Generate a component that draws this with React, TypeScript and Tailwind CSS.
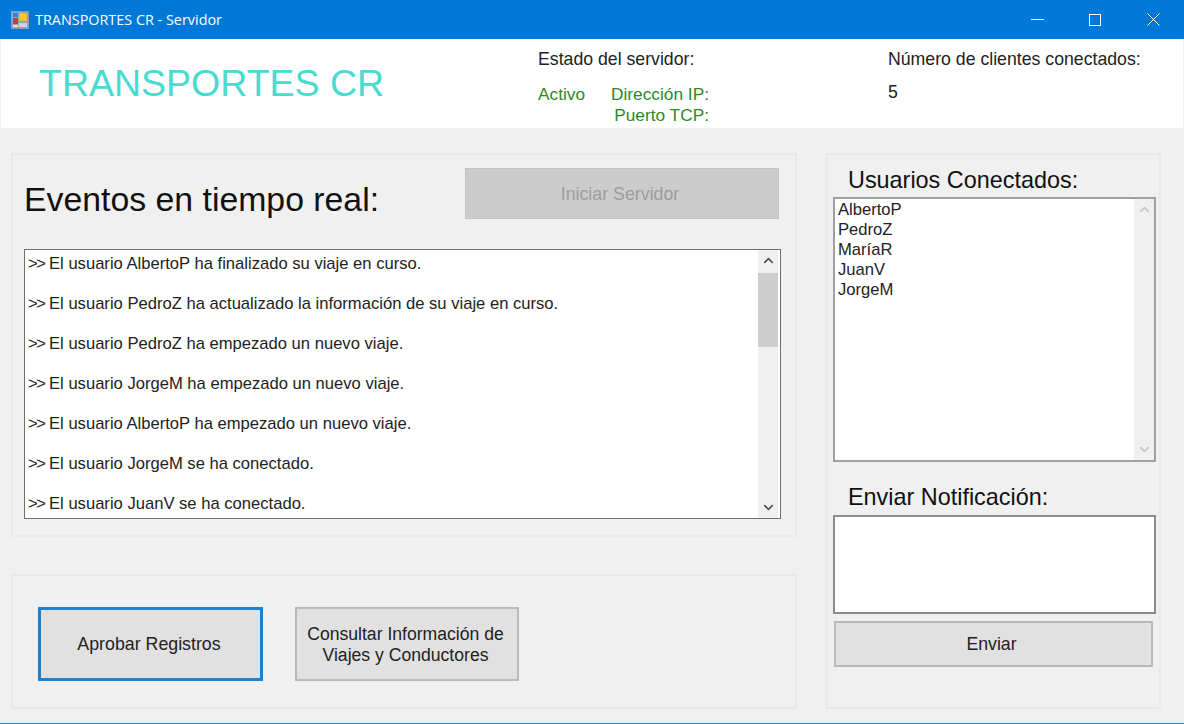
import { ChevronUp, ChevronDown } from 'lucide-react';

const events = [
  'El usuario AlbertoP ha finalizado su viaje en curso.',
  'El usuario PedroZ ha actualizado la información de su viaje en curso.',
  'El usuario PedroZ ha empezado un nuevo viaje.',
  'El usuario JorgeM ha empezado un nuevo viaje.',
  'El usuario AlbertoP ha empezado un nuevo viaje.',
  'El usuario JorgeM se ha conectado.',
  'El usuario JuanV se ha conectado.',
];

const users = ['AlbertoP', 'PedroZ', 'MaríaR', 'JuanV', 'JorgeM'];

function AppIcon() {
  return (
    <svg width="18" height="18" viewBox="0 0 18 18" className="flex-shrink-0">
      <rect x="0.5" y="0.5" width="17" height="17" fill="#8fa6c6" stroke="#8a9ab0" />
      <rect x="2" y="2" width="5" height="4" fill="#3f7fd0" />
      <rect x="8" y="2" width="8" height="8" fill="#f5c83c" stroke="#c89a20" strokeWidth="0.5" />
      <rect x="2" y="7" width="5" height="6" fill="#d23a3a" />
      <rect x="8" y="12" width="8" height="4" fill="#c4d4ea" />
      <rect x="2" y="14" width="5" height="2" fill="#d8e2ee" />
    </svg>
  );
}

function TitleBar() {
  return (
    <div className="h-[39px] bg-[#0078d7] flex items-center pl-[11px] text-white">
      <AppIcon />
      <span className="ml-[6px] text-[14.4px]" style={{ fontFamily: '"Open Sans", sans-serif' }}>
        TRANSPORTES CR - Servidor
      </span>
      <div className="ml-auto flex items-center pr-[2px]">
        <div className="w-[58px] flex justify-center">
          <div className="w-[13px] h-px bg-white" />
        </div>
        <div className="w-[58px] flex justify-center">
          <div className="w-[12px] h-[12px] border border-white" />
        </div>
        <div className="w-[58px] flex justify-center">
          <svg width="13" height="13" viewBox="0 0 13 13" stroke="white" strokeWidth="1">
            <path d="M0.5 0.5 L12.5 12.5 M12.5 0.5 L0.5 12.5" />
          </svg>
        </div>
      </div>
    </div>
  );
}

function Header() {
  return (
    <div className="h-[89px] bg-white mx-px flex">
      <div className="w-[537px] pl-[38px] pt-[21px] text-[37.5px] leading-[46px] text-[#48dbcf]">
        TRANSPORTES CR
      </div>
      <div className="w-[350px] pt-[10px] leading-[20px]">
        <div className="text-[17.7px] text-[#222]">Estado del servidor:</div>
        <div className="flex mt-[15px] text-[17.3px] text-[#2a8a2a]">
          <span className="w-[73px]">Activo</span>
          <div className="flex flex-col items-end w-[98px]">
            <span>Dirección IP:</span>
            <span className="mt-px">Puerto TCP:</span>
          </div>
        </div>
      </div>
      <div className="pt-[10px] text-[17.7px] leading-[20px] text-[#222] whitespace-nowrap">
        <div>Número de clientes conectados:</div>
        <div className="mt-[13px]">5</div>
      </div>
    </div>
  );
}

function Scrollbar({ disabled }: { disabled?: boolean }) {
  const color = disabled ? '#c4c4c4' : '#505050';
  return (
    <div className="w-[20px] h-full flex-shrink-0 bg-[#f0f0f0] flex flex-col items-center justify-between py-[3px]">
      <ChevronUp size={15} strokeWidth={2.5} color={color} />
      <ChevronDown size={15} strokeWidth={2.5} color={color} />
    </div>
  );
}

export default function App() {
  return (
    <div
      className="w-[1184px] h-[724px] overflow-hidden bg-[#f0f0f0] border-b border-[#1a86c8]"
      style={{ fontFamily: '"Liberation Sans", Arial, sans-serif' }}
    >
      <TitleBar />
      <Header />
      <div className="flex pl-[11px] pt-[25px] gap-[29px]">
        <div className="w-[786px] flex flex-col gap-[37px]">
          <div className="h-[384px] border-2 border-[#e9e9e9] pl-[11px] pt-[13px]">
            <div className="flex items-start">
              <h1 className="w-[441px] pt-[12px] text-[33.8px] leading-[38px] font-normal text-[#111]">
                Eventos en tiempo real:
              </h1>
              <button className="w-[314px] h-[51px] pt-px pr-[4px] bg-[#cccccc] border border-[#c4c4c4] text-[17.8px] text-[#9c9c9c]">
                Iniciar Servidor
              </button>
            </div>
            <div className="mt-[30px] w-[757px] h-[270px] bg-white border border-[#6e6e6e] flex overflow-hidden pr-[2px]">
              <div className="flex-1 pl-[3px] pt-[4px] text-[16.6px] leading-[20px] text-[#222] flex flex-col gap-[20px]">
                {events.map((event, idx) => (
                  <div key={idx} className="whitespace-nowrap">
                    <span className="tracking-[-1.5px]">{'>>'}</span> {event}
                  </div>
                ))}
              </div>
              <div className="relative">
                <Scrollbar />
                <div className="absolute left-0 top-[23px] w-[20px] h-[74px] bg-[#cdcdcd]" />
              </div>
            </div>
          </div>
          <div className="h-[135px] border-2 border-[#e9e9e9] pl-[25px] pt-[31px] flex items-start gap-[32px]">
            <button className="w-[225px] h-[74px] pt-px pr-[3px] bg-[#e1e1e1] border-[3px] border-[#2080cc] text-[17.8px] text-[#222]">
              Aprobar Registros
            </button>
            <button className="w-[224px] h-[74px] pt-px pr-[3px] bg-[#e1e1e1] border-2 border-[#bababa] text-[17.6px] leading-[21px] text-[#222] whitespace-nowrap">
              Consultar Información de
              <br />
              Viajes y Conductores
            </button>
          </div>
        </div>

        <div className="w-[335px] h-[556px] border-2 border-[#e9e9e9] pl-[5px] pt-[11px]">
          <div className="pl-[15px] text-[23.4px] leading-[28px] text-[#111]">Usuarios Conectados:</div>
          <div className="mt-[3px] w-[323px] h-[265px] bg-white border-2 border-[#a0a0a0] flex">
            <div className="flex-1 pl-[3px] pt-px text-[16.6px] leading-[20px] text-[#222]">
              {users.map((user) => (
                <div key={user}>{user}</div>
              ))}
            </div>
            <Scrollbar disabled />
          </div>
          <div className="mt-[21px] pl-[15px] text-[23.4px] leading-[28px] text-[#111]">Enviar Notificación:</div>
          <div className="mt-[4px] w-[323px] h-[99px] bg-white border-2 border-[#8c8c8c]" />
          <button className="mt-[7px] ml-px w-[319px] h-[46px] pt-px pr-[4px] bg-[#e1e1e1] border-2 border-[#bababa] text-[17.7px] text-[#222]">
            Enviar
          </button>
        </div>
      </div>
    </div>
  );
}
